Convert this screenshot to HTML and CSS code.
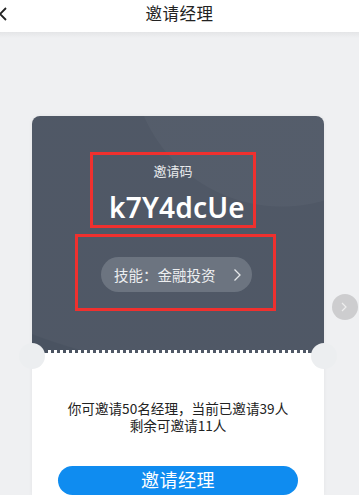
FILE: index.html
```html
<!DOCTYPE html>
<html lang="zh">
<head>
<meta charset="utf-8">
<link rel="stylesheet" href="styles.css">
</head>
<body>
<header class="topbar">
  <svg class="back" width="10" height="16" viewBox="0 0 10 16"><path d="M7 2 L1 8 L7 14" fill="none" stroke="#222" stroke-width="1.8"/></svg>
  <div class="title">邀请经理</div>
</header>
<div class="shade"></div>
<main class="page">
  <section class="card">
    <div class="card-top">
      <div class="mark mark-code">
        <div class="code-label">邀请码</div>
        <div class="code">k7Y4dcUe</div>
      </div>
      <div class="mark mark-skill">
        <div class="pill"><span>技能：金融投资</span>
          <svg width="9" height="14" viewBox="0 0 9 14"><path d="M1.5 1.5 L7 7 L1.5 12.5" fill="none" stroke="#e6e8ea" stroke-width="1.3"/></svg>
        </div>
      </div>
      <div class="perf"></div>
      <div class="notch notch-l"></div>
      <div class="notch notch-r"></div>
    </div>
    <div class="card-bottom">
      <p class="info">你可邀请50名经理，当前已邀请39人<br>剩余可邀请11人</p>
      <button class="invite">邀请经理</button>
    </div>
  </section>
  <div class="next">
    <svg width="8" height="12" viewBox="0 0 8 12"><path d="M2 2 L6 6 L2 10" fill="none" stroke="#eeeeee" stroke-width="1.2"/></svg>
  </div>
</main>
</body>
</html>
```
FILE: styles.css
```css
* { box-sizing: border-box; }
html, body { margin: 0; padding: 0; }
body {
  width: 359px;
  height: 495px;
  overflow: hidden;
  background: #eff0f2;
  font-family: "Noto Sans CJK SC", "Noto Sans", sans-serif;
  position: relative;
}
.topbar {
  height: 32px;
  background: #fff;
  display: flex;
  align-items: center;
  justify-content: center;
  position: relative;
}
.back { position: absolute; left: -1px; top: 6px; }
.title { font-size: 16.5px; color: #222; margin-top: -6px; letter-spacing: 0.5px; }
.shade {
  height: 6px;
  background: linear-gradient(#e4e5e7, #eff0f2);
}
.page {
  padding-top: 78px;
  padding-left: 32px;
  position: relative;
}
.card {
  width: 292px;
  border-radius: 8px 8px 0 0;
  box-shadow: 0 0 4px rgba(0,0,0,0.05);
}
.card-top {
  position: relative;
  height: 237px;
  border-radius: 8px 8px 0 0;
  background:
    radial-gradient(circle at 250px -60px, rgba(255,255,255,0.03) 150px, transparent 151px),
    radial-gradient(ellipse 420px 230px at 240px 30px, rgba(255,255,255,0.03) 99.5%, transparent 100%),
    #4a5361;
  padding-top: 36px;
  display: flex;
  flex-direction: column;
  align-items: center;
}
.mark { border: 3px solid #f0302e; }
.mark-code {
  width: 166px;
  height: 76px;
  margin-left: -10px;
  display: flex;
  flex-direction: column;
  align-items: center;
}
.code-label {
  font-size: 13px;
  color: #e8eaec;
  margin-top: 7px;
  line-height: 18px;
}
.code {
  font-family: "Noto Sans", sans-serif;
  font-weight: 600;
  font-size: 28px;
  color: #fff;
  line-height: 34px;
  margin-top: 10px;
  margin-left: 8px;
  letter-spacing: 0.2px;
}
.mark-skill {
  width: 201px;
  height: 77px;
  margin-top: 6px;
  margin-left: -5px;
  padding-top: 20px;
  display: flex;
  justify-content: center;
}
.pill {
  width: 151px;
  height: 35px;
  border-radius: 18px;
  background: #6c7480;
  color: #eceef0;
  font-size: 14.5px;
  display: flex;
  align-items: center;
  justify-content: space-between;
  padding: 0 10px 0 13px;
  margin-left: 2px;
}
.perf {
  position: absolute;
  left: 16px;
  right: 16px;
  bottom: 0;
  height: 3px;
  background: repeating-linear-gradient(90deg, #ffffff 0 3px, transparent 3px 6px);
}
.notch {
  position: absolute;
  width: 26px;
  height: 26px;
  border-radius: 50%;
  background: #eceef0;
  bottom: -16px;
  z-index: 2;
}
.notch-l { left: -13px; }
.notch-r { right: -13px; }
.card-bottom {
  background: #fff;
  height: 142px;
  padding-top: 47px;
  display: flex;
  flex-direction: column;
  align-items: center;
}
.info {
  margin: 0;
  font-size: 13.6px;
  line-height: 17px;
  color: #222;
  text-align: center;
}
.invite {
  margin-top: 32px;
  width: 240px;
  height: 44px;
  border: none;
  border-radius: 22px;
  background: #0f8cf0;
  color: #fff;
  font-family: "Noto Sans CJK SC", sans-serif;
  font-size: 18px;
  line-height: 24px;
  padding: 0 0 3px;
  letter-spacing: 0.5px;
}
.next {
  position: absolute;
  left: 332px;
  top: 256px;
  width: 26px;
  height: 26px;
  border-radius: 50%;
  background: #cdcdcf;
  display: flex;
  align-items: center;
  justify-content: center;
  padding-right: 2px;
}
```
